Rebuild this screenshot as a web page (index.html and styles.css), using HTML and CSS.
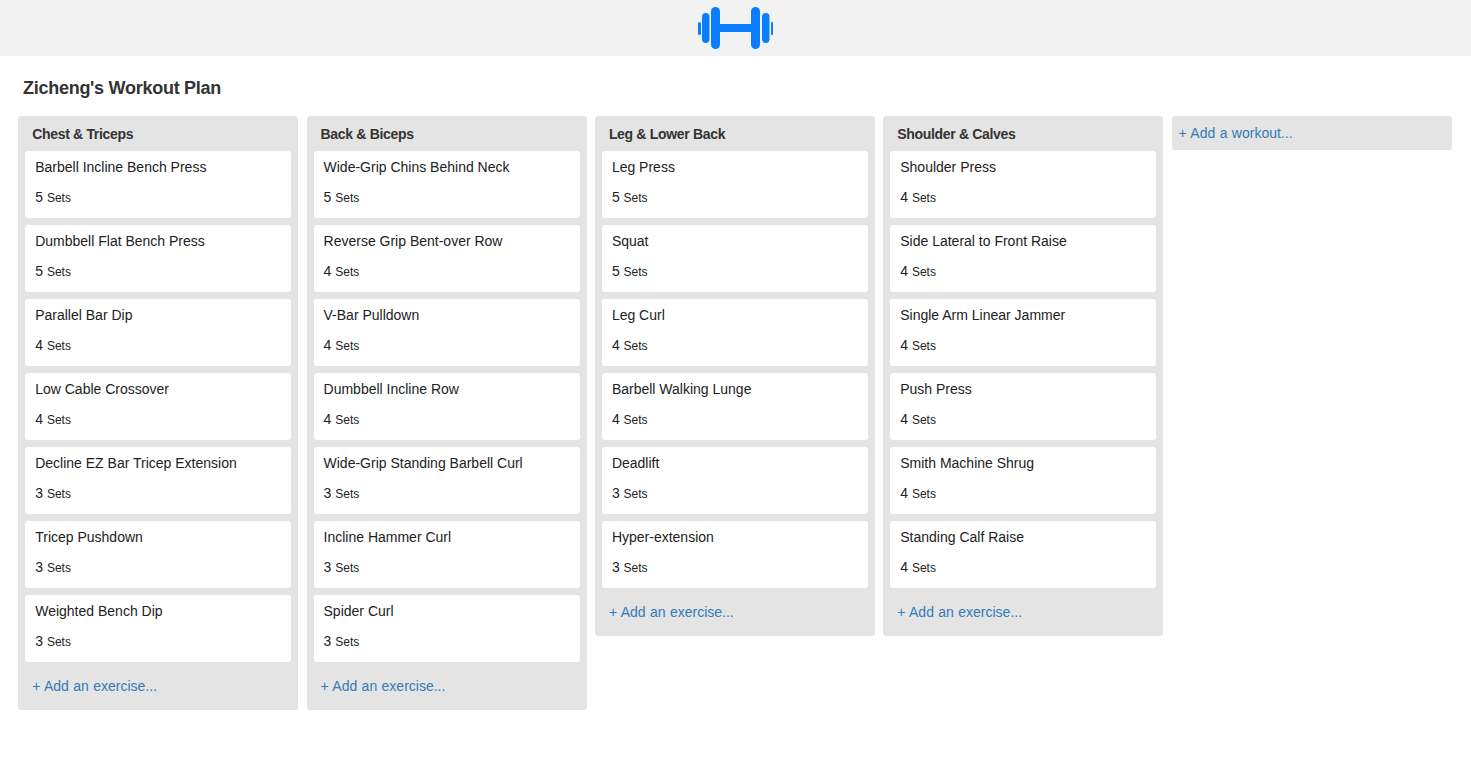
FILE: index.html
```html
<!DOCTYPE html>
<html lang="en">
<head>
    <meta charset="UTF-8">
    <meta name="viewport" content="width=device-width, initial-scale=1.0">
    <title>Zicheng's Workout Plan</title>
    <link rel="stylesheet" href="styles.css">
</head>
<body>
    <header class="topbar">
        <svg class="logo" width="75" height="42" viewBox="0 0 75 42" fill="#0a7efc">
            <rect x="0" y="15" width="3" height="13" rx="1.5"/>
            <rect x="4" y="6" width="7.500" height="30" rx="3.700"/>
            <rect x="13" y="0" width="9" height="42" rx="4.500"/>
            <rect x="21" y="17" width="33" height="8"/>
            <rect x="53" y="0" width="9" height="42" rx="4.500"/>
            <rect x="64" y="6" width="7.500" height="30" rx="3.700"/>
            <rect x="73" y="15" width="2.500" height="13" rx="1.200"/>
        </svg>
    </header>

    <h1 class="plan-title">Zicheng's Workout Plan</h1>

    <main class="board">
        <section class="list">
            <h2 class="list-title">Chest &amp; Triceps</h2>
            <div class="card"><p class="card-name">Barbell Incline Bench Press</p><p class="card-sets">5 <small>Sets</small></p></div>
            <div class="card"><p class="card-name">Dumbbell Flat Bench Press</p><p class="card-sets">5 <small>Sets</small></p></div>
            <div class="card"><p class="card-name">Parallel Bar Dip</p><p class="card-sets">4 <small>Sets</small></p></div>
            <div class="card"><p class="card-name">Low Cable Crossover</p><p class="card-sets">4 <small>Sets</small></p></div>
            <div class="card"><p class="card-name">Decline EZ Bar Tricep Extension</p><p class="card-sets">3 <small>Sets</small></p></div>
            <div class="card"><p class="card-name">Tricep Pushdown</p><p class="card-sets">3 <small>Sets</small></p></div>
            <div class="card"><p class="card-name">Weighted Bench Dip</p><p class="card-sets">3 <small>Sets</small></p></div>
            <a class="add-link" href="#">+ Add an exercise...</a>
        </section>

        <section class="list">
            <h2 class="list-title">Back &amp; Biceps</h2>
            <div class="card"><p class="card-name">Wide-Grip Chins Behind Neck</p><p class="card-sets">5 <small>Sets</small></p></div>
            <div class="card"><p class="card-name">Reverse Grip Bent-over Row</p><p class="card-sets">4 <small>Sets</small></p></div>
            <div class="card"><p class="card-name">V-Bar Pulldown</p><p class="card-sets">4 <small>Sets</small></p></div>
            <div class="card"><p class="card-name">Dumbbell Incline Row</p><p class="card-sets">4 <small>Sets</small></p></div>
            <div class="card"><p class="card-name">Wide-Grip Standing Barbell Curl</p><p class="card-sets">3 <small>Sets</small></p></div>
            <div class="card"><p class="card-name">Incline Hammer Curl</p><p class="card-sets">3 <small>Sets</small></p></div>
            <div class="card"><p class="card-name">Spider Curl</p><p class="card-sets">3 <small>Sets</small></p></div>
            <a class="add-link" href="#">+ Add an exercise...</a>
        </section>

        <section class="list">
            <h2 class="list-title">Leg &amp; Lower Back</h2>
            <div class="card"><p class="card-name">Leg Press</p><p class="card-sets">5 <small>Sets</small></p></div>
            <div class="card"><p class="card-name">Squat</p><p class="card-sets">5 <small>Sets</small></p></div>
            <div class="card"><p class="card-name">Leg Curl</p><p class="card-sets">4 <small>Sets</small></p></div>
            <div class="card"><p class="card-name">Barbell Walking Lunge</p><p class="card-sets">4 <small>Sets</small></p></div>
            <div class="card"><p class="card-name">Deadlift</p><p class="card-sets">3 <small>Sets</small></p></div>
            <div class="card"><p class="card-name">Hyper-extension</p><p class="card-sets">3 <small>Sets</small></p></div>
            <a class="add-link" href="#">+ Add an exercise...</a>
        </section>

        <section class="list">
            <h2 class="list-title">Shoulder &amp; Calves</h2>
            <div class="card"><p class="card-name">Shoulder Press</p><p class="card-sets">4 <small>Sets</small></p></div>
            <div class="card"><p class="card-name">Side Lateral to Front Raise</p><p class="card-sets">4 <small>Sets</small></p></div>
            <div class="card"><p class="card-name">Single Arm Linear Jammer</p><p class="card-sets">4 <small>Sets</small></p></div>
            <div class="card"><p class="card-name">Push Press</p><p class="card-sets">4 <small>Sets</small></p></div>
            <div class="card"><p class="card-name">Smith Machine Shrug</p><p class="card-sets">4 <small>Sets</small></p></div>
            <div class="card"><p class="card-name">Standing Calf Raise</p><p class="card-sets">4 <small>Sets</small></p></div>
            <a class="add-link" href="#">+ Add an exercise...</a>
        </section>

        <section class="list list-new">
            <a class="add-link" href="#">+ Add a workout...</a>
        </section>
    </main>
</body>
</html>
```

FILE: styles.css
```css
body {
    margin: 0;
    font-family: "Liberation Sans", Arial, sans-serif;
    font-size: 14px;
    color: #333;
    background: #fff;
}
p {
    margin: 0;
}
.topbar {
    height: 56px;
    background-color: #f2f2f2;
    display: flex;
    justify-content: center;
    padding-top: 7px;
    box-sizing: border-box;
}
.logo {
    display: block;
}
.plan-title {
    margin: 0;
    padding: 22px 0 0 23px;
    height: 38px;
    font-size: 18px;
    line-height: 20px;
    font-weight: bold;
    letter-spacing: -0.27px;
}
.board {
    display: flex;
    align-items: flex-start;
    gap: 8.35px;
    padding-left: 18.2px;
}
.list {
    width: 280px;
    flex: none;
    box-sizing: border-box;
    padding: 0 7px;
    background-color: #e4e4e4;
    border-radius: 3px;
}
.list-title {
    margin: 0;
    padding: 10px 7px 0;
    height: 35px;
    box-sizing: border-box;
    font-size: 14px;
    line-height: 16px;
    font-weight: bold;
    letter-spacing: -0.32px;
}
.card {
    height: 67px;
    box-sizing: border-box;
    margin-bottom: 7px;
    padding: 8px 10px 0;
    background-color: #fff;
    border-radius: 3px;
    color: #222;
}
.card-name {
    line-height: 16px;
    margin-bottom: 14px;
}
.card-sets {
    line-height: 16px;
}
.card-sets small {
    font-size: 12px;
}
.add-link {
    display: block;
    height: 41px;
    box-sizing: border-box;
    padding: 9px 7px 0;
    line-height: 16px;
    color: #337ab7;
    text-decoration: none;
    word-spacing: 0.5px;
}
.list-new {
    height: 34px;
    padding: 0;
}
```
